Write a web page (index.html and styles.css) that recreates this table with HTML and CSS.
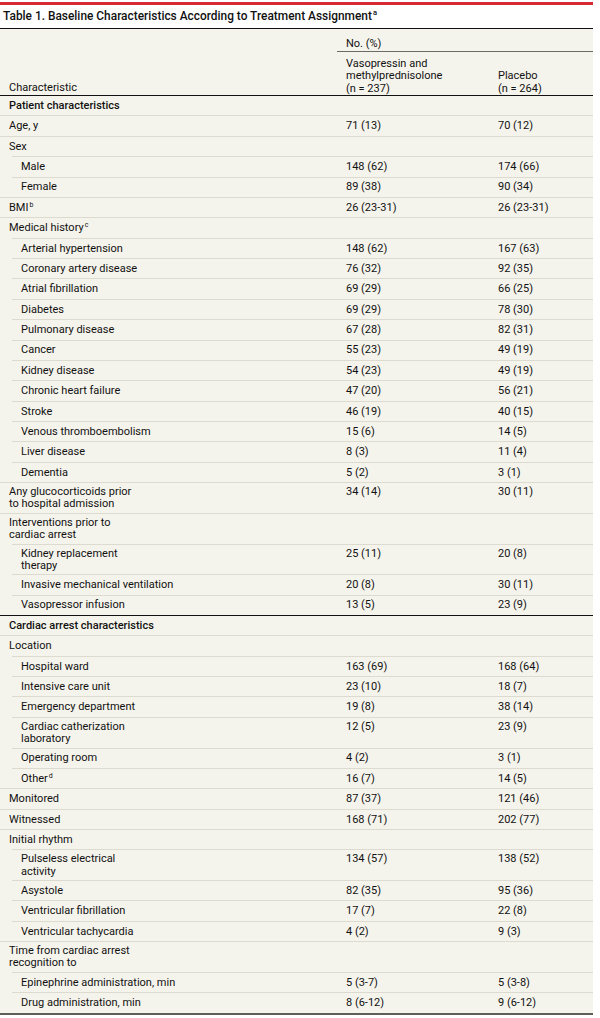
FILE: index.html
```html
<!DOCTYPE html>
<html>
<head>
<meta charset="utf-8">
<link rel="stylesheet" href="styles.css">
</head>
<body>
<div class="page">
  <div class="title">Table 1. Baseline Characteristics According to Treatment Assignment<sup>a</sup></div>
  <div class="table">
    <div class="thead">
      <div class="th-char">Characteristic</div>
      <div class="th-group">
        <div class="th-span">No. (%)</div>
        <div class="th-cols">
          <div class="th-c1">Vasopressin and<br>methylprednisolone<br>(n = 237)</div>
          <div class="th-c2">Placebo<br>(n = 264)</div>
        </div>
      </div>
    </div>

    <div class="row sec first"><div class="c">Patient characteristics</div><div class="c"></div><div class="c"></div></div>
    <div class="row"><div class="c">Age, y</div><div class="c">71 (13)</div><div class="c">70 (12)</div></div>
    <div class="row"><div class="c">Sex</div><div class="c"></div><div class="c"></div></div>
    <div class="row ind"><div class="c">Male</div><div class="c">148 (62)</div><div class="c">174 (66)</div></div>
    <div class="row ind"><div class="c">Female</div><div class="c">89 (38)</div><div class="c">90 (34)</div></div>
    <div class="row"><div class="c">BMI<sup>b</sup></div><div class="c">26 (23-31)</div><div class="c">26 (23-31)</div></div>
    <div class="row"><div class="c">Medical history<sup>c</sup></div><div class="c"></div><div class="c"></div></div>
    <div class="row ind"><div class="c">Arterial hypertension</div><div class="c">148 (62)</div><div class="c">167 (63)</div></div>
    <div class="row ind"><div class="c">Coronary artery disease</div><div class="c">76 (32)</div><div class="c">92 (35)</div></div>
    <div class="row ind"><div class="c">Atrial fibrillation</div><div class="c">69 (29)</div><div class="c">66 (25)</div></div>
    <div class="row ind"><div class="c">Diabetes</div><div class="c">69 (29)</div><div class="c">78 (30)</div></div>
    <div class="row ind"><div class="c">Pulmonary disease</div><div class="c">67 (28)</div><div class="c">82 (31)</div></div>
    <div class="row ind"><div class="c">Cancer</div><div class="c">55 (23)</div><div class="c">49 (19)</div></div>
    <div class="row ind"><div class="c">Kidney disease</div><div class="c">54 (23)</div><div class="c">49 (19)</div></div>
    <div class="row ind"><div class="c">Chronic heart failure</div><div class="c">47 (20)</div><div class="c">56 (21)</div></div>
    <div class="row ind"><div class="c">Stroke</div><div class="c">46 (19)</div><div class="c">40 (15)</div></div>
    <div class="row ind"><div class="c">Venous thromboembolism</div><div class="c">15 (6)</div><div class="c">14 (5)</div></div>
    <div class="row ind"><div class="c">Liver disease</div><div class="c">8 (3)</div><div class="c">11 (4)</div></div>
    <div class="row ind"><div class="c">Dementia</div><div class="c">5 (2)</div><div class="c">3 (1)</div></div>
    <div class="row two"><div class="c">Any glucocorticoids prior<br>to hospital admission</div><div class="c">34 (14)</div><div class="c">30 (11)</div></div>
    <div class="row two"><div class="c">Interventions prior to<br>cardiac arrest</div><div class="c"></div><div class="c"></div></div>
    <div class="row ind two"><div class="c">Kidney replacement<br>therapy</div><div class="c">25 (11)</div><div class="c">20 (8)</div></div>
    <div class="row ind"><div class="c">Invasive mechanical ventilation</div><div class="c">20 (8)</div><div class="c">30 (11)</div></div>
    <div class="row ind"><div class="c">Vasopressor infusion</div><div class="c">13 (5)</div><div class="c">23 (9)</div></div>

    <div class="row sec dark"><div class="c">Cardiac arrest characteristics</div><div class="c"></div><div class="c"></div></div>
    <div class="row"><div class="c">Location</div><div class="c"></div><div class="c"></div></div>
    <div class="row ind"><div class="c">Hospital ward</div><div class="c">163 (69)</div><div class="c">168 (64)</div></div>
    <div class="row ind"><div class="c">Intensive care unit</div><div class="c">23 (10)</div><div class="c">18 (7)</div></div>
    <div class="row ind"><div class="c">Emergency department</div><div class="c">19 (8)</div><div class="c">38 (14)</div></div>
    <div class="row ind two"><div class="c">Cardiac catherization<br>laboratory</div><div class="c">12 (5)</div><div class="c">23 (9)</div></div>
    <div class="row ind"><div class="c">Operating room</div><div class="c">4 (2)</div><div class="c">3 (1)</div></div>
    <div class="row ind"><div class="c">Other<sup>d</sup></div><div class="c">16 (7)</div><div class="c">14 (5)</div></div>
    <div class="row"><div class="c">Monitored</div><div class="c">87 (37)</div><div class="c">121 (46)</div></div>
    <div class="row"><div class="c">Witnessed</div><div class="c">168 (71)</div><div class="c">202 (77)</div></div>
    <div class="row"><div class="c">Initial rhythm</div><div class="c"></div><div class="c"></div></div>
    <div class="row ind two"><div class="c">Pulseless electrical<br>activity</div><div class="c">134 (57)</div><div class="c">138 (52)</div></div>
    <div class="row ind"><div class="c">Asystole</div><div class="c">82 (35)</div><div class="c">95 (36)</div></div>
    <div class="row ind"><div class="c">Ventricular fibrillation</div><div class="c">17 (7)</div><div class="c">22 (8)</div></div>
    <div class="row ind"><div class="c">Ventricular tachycardia</div><div class="c">4 (2)</div><div class="c">9 (3)</div></div>
    <div class="row two"><div class="c">Time from cardiac arrest<br>recognition to</div><div class="c"></div><div class="c"></div></div>
    <div class="row ind"><div class="c">Epinephrine administration, min</div><div class="c">5 (3-7)</div><div class="c">5 (3-8)</div></div>
    <div class="row ind"><div class="c">Drug administration, min</div><div class="c">8 (6-12)</div><div class="c">9 (6-12)</div></div>
  </div>
</div>
</body>
</html>
```
FILE: styles.css
```css
* { box-sizing: border-box; }
html, body { margin: 0; padding: 0; background: #ffffff; }
body {
  font-family: Roboto, "Liberation Sans", sans-serif;
  font-size: 11px;
  color: #111111;
}
.page {
  width: 593px;
  padding-top: 2px;
}
.title {
  border-top: 3px solid #d62b32;
  border-bottom: 1px solid #111111;
  font-size: 11.9px;
  font-weight: 500;
  line-height: 16px;
  padding: 3px 0 4px 3px;
  color: #111111;
}
sup {
  font-size: 7px;
  line-height: 0;
  vertical-align: 4px;
  margin-left: 1px;
}
.title sup {
  font-size: 7.5px;
  vertical-align: 5px;
}
.table {
  background: #f5f4ec;
  border-bottom: 2px solid #5f5f5a;
}
.thead {
  display: grid;
  grid-template-columns: 337px 1fr;
  height: 66px;
  align-items: end;
}
.th-char {
  padding: 0 0 1px 9px;
  line-height: 12.5px;
}
.th-group {
  display: flex;
  flex-direction: column;
  height: 100%;
}
.th-span {
  padding: 8px 0 0 9px;
  line-height: 13px;
  height: 23px;
  border-bottom: 1px solid #6b6b64;
}
.th-cols {
  flex: 1;
  display: grid;
  grid-template-columns: 152px 1fr;
  align-items: end;
  line-height: 12.5px;
  padding-bottom: 0;
}
.th-c1, .th-c2 { padding-left: 9px; }
.row {
  display: grid;
  grid-template-columns: 337px 152px 1fr;
  border-top: 1px solid #dddbd0;
  line-height: 12.3px;
}
.row.ind {
  margin-left: 12px;
  grid-template-columns: 325px 152px 1fr;
}
.row.first, .row.dark {
  border-top: 1px solid #111111;
}
.c {
  padding: 3.9px 0 3.2px 9px;
}
.row.two .c {
  padding: 3px 0 2.1px 9px;
}
.row.sec .c:first-child {
  font-weight: 500;
}
```
